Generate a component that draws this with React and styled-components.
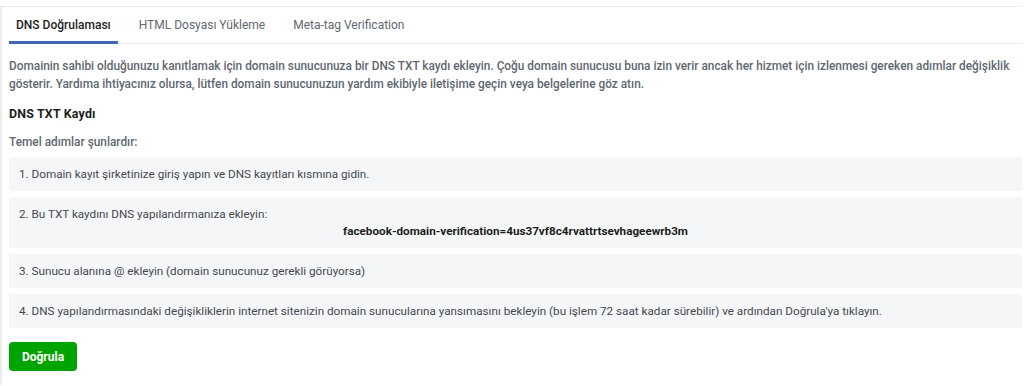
import styled, { createGlobalStyle } from 'styled-components'

const Global = createGlobalStyle`
  body {
    margin: 0;
    background: #ffffff;
    font-family: Roboto, "Liberation Sans", sans-serif;
  }
`

const Page = styled.div`
  padding-top: 6px;
  padding-right: 2px;
`

const Card = styled.div`
  border-top: 1px solid #ececec;
  border-left: 2px solid #ececec;
  padding: 0 0 14px 7px;
  background: #fff;
`

const Tabs = styled.div`
  display: flex;
  border-bottom: 1px solid #eeeeee;
  height: 36px;
`

const Tab = styled.div`
  padding: 0 7px;
  margin-right: 14px;
  display: flex;
  align-items: center;
  font-size: 12px;
  font-weight: ${p => (p.active ? 500 : 400)};
  color: ${p => (p.active ? '#1c1e21' : '#606770')};
  border-bottom: 3px solid ${p => (p.active ? '#4267b2' : 'transparent')};
  margin-bottom: -1px;
  padding-top: 2px;
`

const Body = styled.div`
  padding-top: 13px;
`

const Intro = styled.p`
  margin: 0;
  font-size: 11.85px;
  line-height: 18px;
  font-weight: 500;
  color: #606770;
`

const Heading = styled.div`
  margin-top: 12px;
  font-size: 12.4px;
  font-weight: 700;
  letter-spacing: 0.2px;
  color: #1c1e21;
  line-height: 18px;
`

const Lead = styled.div`
  margin-top: 10px;
  font-size: 11.85px;
  font-weight: 500;
  color: #606770;
  line-height: 18px;
`

const Steps = styled.div`
  margin-top: 6px;
  display: flex;
  flex-direction: column;
  gap: 6px;
`

const Step = styled.div`
  background: #f5f6f7;
  padding: 10px 10px;
  font-size: 11.7px;
  line-height: 14px;
  color: #444950;
`

const Code = styled.div`
  text-align: center;
  font-weight: 700;
  color: #1c1e21;
  margin-top: 3px;
`

const Button = styled.button`
  margin-top: 14px;
  width: 68px;
  height: 29px;
  border: none;
  border-radius: 4px;
  background: #00a400;
  color: #fff;
  font-family: Roboto, "Liberation Sans", sans-serif;
  font-size: 12px;
  font-weight: 700;
  cursor: pointer;
`

export default function App() {
  return (
    <Page>
      <Global />
      <Card>
        <Tabs>
          <Tab active>DNS Doğrulaması</Tab>
          <Tab>HTML Dosyası Yükleme</Tab>
          <Tab>Meta-tag Verification</Tab>
        </Tabs>
        <Body>
          <Intro>
            Domainin sahibi olduğunuzu kanıtlamak için domain sunucunuza bir DNS TXT kaydı ekleyin. Çoğu domain
            sunucusu buna izin verir ancak her hizmet için izlenmesi gereken adımlar değişiklik gösterir. Yardıma
            ihtiyacınız olursa, lütfen domain sunucunuzun yardım ekibiyle iletişime geçin veya belgelerine göz atın.
          </Intro>
          <Heading>DNS TXT Kaydı</Heading>
          <Lead>Temel adımlar şunlardır:</Lead>
          <Steps>
            <Step>1. Domain kayıt şirketinize giriş yapın ve DNS kayıtları kısmına gidin.</Step>
            <Step>
              2. Bu TXT kaydını DNS yapılandırmanıza ekleyin:
              <Code>facebook-domain-verification=4us37vf8c4rvattrtsevhageewrb3m</Code>
            </Step>
            <Step>3. Sunucu alanına @ ekleyin (domain sunucunuz gerekli görüyorsa)</Step>
            <Step>
              4. DNS yapılandırmasındaki değişikliklerin internet sitenizin domain sunucularına yansımasını bekleyin
              (bu işlem 72 saat kadar sürebilir) ve ardından Doğrula'ya tıklayın.
            </Step>
          </Steps>
          <Button>Doğrula</Button>
        </Body>
      </Card>
    </Page>
  )
}
